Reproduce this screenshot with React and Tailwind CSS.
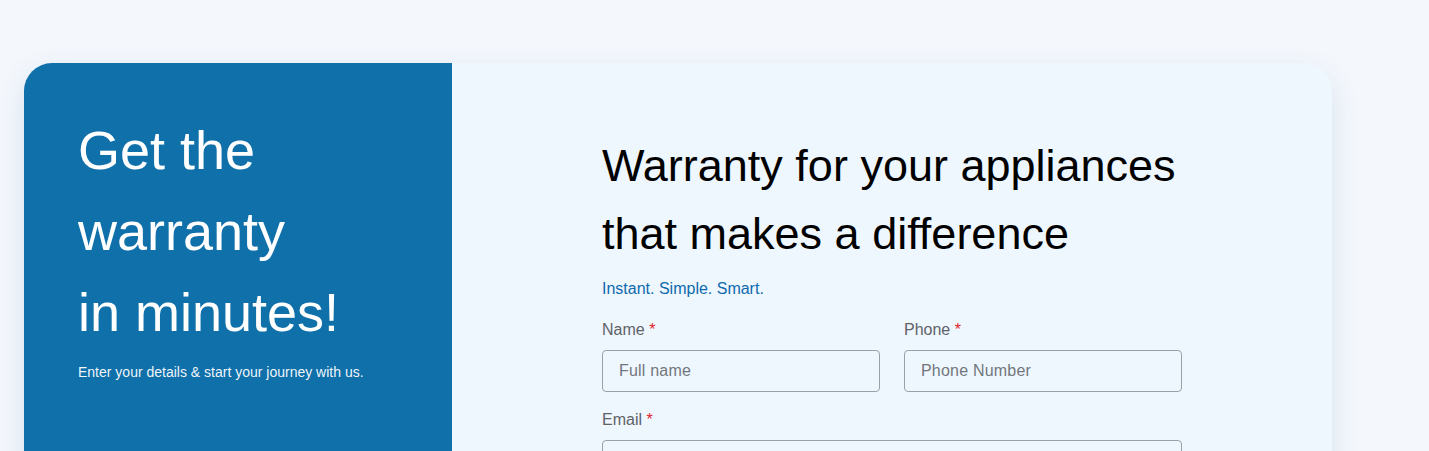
export default function App() {
  return (
    <div
      className="min-h-[451px] bg-[#f4f8fd] pt-[63px] pl-6 overflow-hidden"
      style={{ fontFamily: '"Liberation Sans", Arial, sans-serif' }}
    >
      <div className="flex w-[1308px] h-[420px] rounded-t-[28px] overflow-hidden shadow-[0_10px_30px_rgba(30,64,120,0.12)]">
        {/* left panel */}
        <div className="w-[428px] shrink-0 bg-[#0f70aa] pl-[54px] pt-[47px]">
          <h1 className="text-[54px] leading-[81px] text-white font-normal">
            Get the
            <br />
            warranty
            <br />
            in minutes!
          </h1>
          <p className="mt-[9px] text-[14px] leading-5 text-white/95">
            Enter your details &amp; start your journey with us.
          </p>
        </div>

        {/* right panel */}
        <div className="flex-1 bg-[#eef6fe] pt-[69px]">
          <div className="mx-auto w-[580px]">
            <h2 className="text-[45px] leading-[67.5px] text-black font-normal">
              Warranty for your appliances
              <br />
              that makes a difference
            </h2>
            <p className="mt-[10px] text-base leading-6 text-[#0f6aad]">Instant. Simple. Smart.</p>

            <div className="mt-[17px] grid grid-cols-2 gap-x-6">
              <div>
                <label className="block text-base leading-6 text-[#5f6368]">
                  Name <span className="text-[#e11d2a]">*</span>
                </label>
                <input
                  placeholder="Full name"
                  className="mt-[8px] w-full h-[42px] rounded border border-[#9aa0a6] bg-transparent px-4 text-base tracking-[0.2px] text-gray-800 placeholder:text-[#72777d] outline-none"
                />
              </div>
              <div>
                <label className="block text-base leading-6 text-[#5f6368]">
                  Phone <span className="text-[#e11d2a]">*</span>
                </label>
                <input
                  placeholder="Phone Number"
                  className="mt-[8px] w-full h-[42px] rounded border border-[#9aa0a6] bg-transparent px-4 text-base tracking-[0.2px] text-gray-800 placeholder:text-[#72777d] outline-none"
                />
              </div>
            </div>

            <div className="mt-[16px]">
              <label className="block text-base leading-6 text-[#5f6368]">
                Email <span className="text-[#e11d2a]">*</span>
              </label>
              <input
                placeholder="Email address"
                className="mt-[8px] w-full h-[42px] rounded border border-[#9aa0a6] bg-transparent px-4 text-base tracking-[0.2px] text-gray-800 placeholder:text-[#72777d] outline-none"
              />
            </div>
          </div>
        </div>
      </div>
    </div>
  )
}
